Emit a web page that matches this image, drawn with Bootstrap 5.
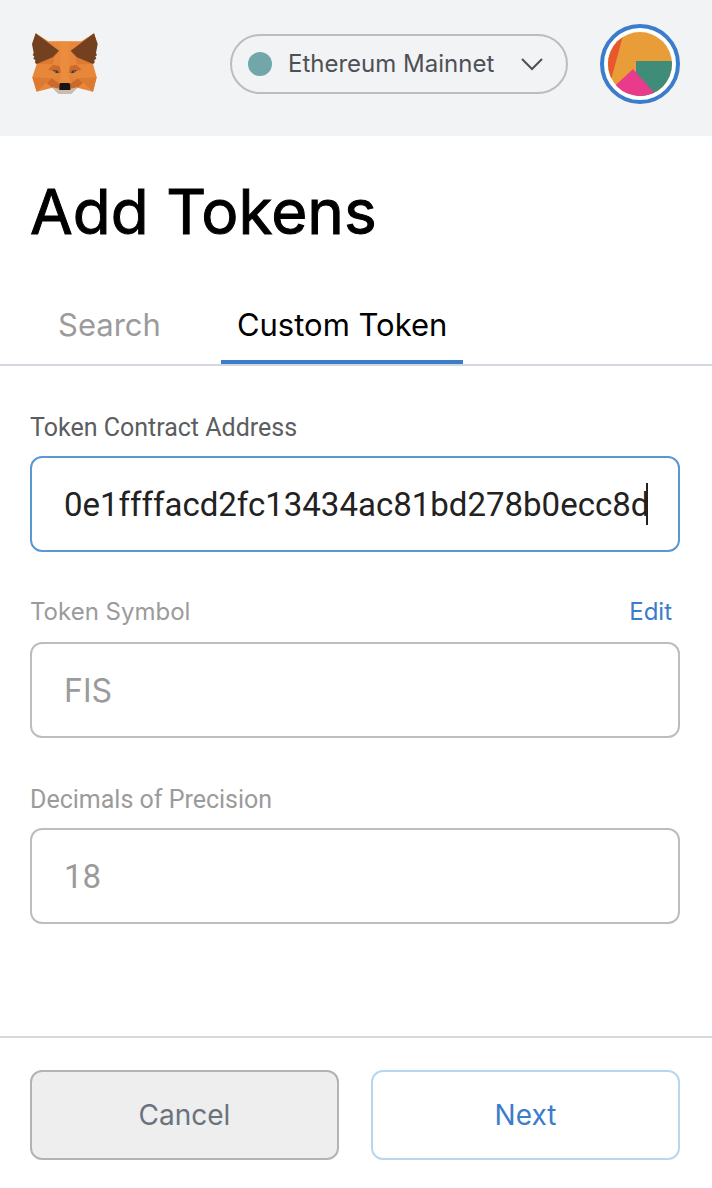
<!DOCTYPE html>
<html lang="en">
<head>
<meta charset="utf-8">
<meta name="viewport" content="width=device-width, initial-scale=1">
<title>Add Tokens</title>
<link href="https://cdn.jsdelivr.net/npm/bootstrap@5.3.0/dist/css/bootstrap.min.css" rel="stylesheet">
<style>
  body { font-family: Inter, "Liberation Sans", sans-serif; color: #000; background: #fff; }
  .app-header { background: #f2f3f4; height: 136px; padding: 0 32px 8px 30px; gap: 32px; }
  .network-btn { height: 60px; width: 338px; border: 2px solid #bbbdc0; border-radius: 30px; padding: 0 22px 0 16px; gap: 16px; font-size: 24px; color: #4d5156; background: transparent; }
  .network-dot { width: 24px; height: 24px; background: #72a7aa; }
  .account-btn { width: 80px; height: 80px; border: 4px solid #3b7dcb; background: #fff; padding: 4px; }
  .page-title { font-size: 62px; line-height: 76px; font-weight: 400; padding: 0 30px; margin: 38px 0 40px; -webkit-text-stroke: 1px #000; }
  .token-tabs { border-bottom: 2px solid #d2d8dd; padding-left: 42px; gap: 44px; }
  .token-tabs .nav-link { height: 74px; padding: 0 16px; font-size: 31px; line-height: 48px; color: #9b9b9b; background: none; border: 0; border-bottom: 4px solid transparent; border-radius: 0; }
  .token-tabs .nav-link.active { color: #000; border-bottom-color: #3b7dcb; }
  .token-form { padding: 42px 32px 112px 30px; gap: 42px; }
  .field-label { font-size: 24px; line-height: 36px; color: #9b9b9b; }
  .field-head { margin-bottom: 12px; }
  .roboto { font-family: Roboto, "Liberation Sans", sans-serif; }
  .field-label.roboto { font-size: 25px; line-height: 32px; padding-top: 4px; }
  .field-label.current { color: #5b5d60; }
  .token-input { height: 96px; border: 2px solid #bbbdc0; border-radius: 12px; padding: 0 30px 0 32px; font-size: 32px; color: #9b9b9b; }
  .token-input:disabled { background: #fff; opacity: 1; color: #9b9b9b; }
  .token-input.roboto { font-size: 33px; }
  .token-input.current, .token-input.current:focus { border-color: #5a98d5; color: #222; box-shadow: none; }
  .edit-link { font-size: 24px; line-height: 36px; color: #3b7dcb; padding-right: 8px; }
  .caret-bar { width: 2px; height: 42px; background: #222; right: 32px; }
  .app-footer { border-top: 2px solid #d6d9dc; padding: 32px 32px 28px 30px; gap: 32px; }
  .action-btn { flex: 1; height: 90px; border-width: 2px; border-radius: 12px; font-size: 28px; }
  .action-cancel, .action-cancel:hover { background: #eee; color: #6a737d; border-color: #b3b3b3; }
  .action-next, .action-next:hover { background: #fff; color: #3b7dcb; border-color: #b9d6ef; }
</style>
</head>
<body>
<header class="app-header d-flex align-items-center">
  <a href="#" aria-label="Home" class="d-block lh-1 me-auto">
    <svg width="70" height="64" viewBox="30 36 210 192" aria-hidden="true">
      <path fill="#e8873a" d="M47 40 85 64H184L222 40 232 72 219 132 230 172 219 215 172 203 154 220H115L97 203 50 215 37 172 50 132 38 72Z"/>
      <path fill="#dd7a32" d="M50 132 117 94 103 112 98 133ZM219 132 152 94 166 112 171 133ZM37 172 96 175 78 188 50 215ZM230 172 173 175 191 188 219 215Z"/>
      <path fill="#ee9548" d="M119 64H150L146 94 151 190H118L123 94Z" opacity=".4"/>
      <path fill="#ca6a2d" d="M84 149 100 134 119 139 123 160ZM185 149 169 134 150 139 146 160ZM96 175 118 190 116 205 97 203 80 189ZM173 175 151 190 153 205 172 203 189 189Z"/>
      <path fill="#e58438" d="M96 175 123 162 118 190ZM173 175 146 162 151 190Z"/>
      <path fill="#734020" d="M47 40 117 92 98 112 50 132 45 128 46 120 40 116 43 109 38 106 41 99 36 72ZM222 40 152 92 171 112 219 132 224 128 223 120 229 116 226 109 231 106 228 99 233 72Z"/>
      <path fill="#c9bdb0" d="M95 201 117 207H152L174 201 154 222H115Z"/>
      <path fill="#45362e" d="M99 150 113 152 116 160 104 158ZM170 150 156 152 153 160 165 158Z"/>
      <path fill="#a4a9af" d="M100 156 108 154 105 159ZM169 156 161 154 164 159Z"/>
      <path fill="#171615" d="M121 189H148L151 194V210H118V194Z"/>
    </svg>
  </a>
  <button type="button" class="network-btn d-flex align-items-center">
    <span class="network-dot rounded-circle"></span>
    <span>Ethereum Mainnet</span>
    <svg class="ms-auto" width="24" height="16" viewBox="0 0 24 16" fill="none" stroke="#4d5156" stroke-width="2" aria-hidden="true"><path d="M2 3 12 13 22 3"/></svg>
  </button>
  <button type="button" class="account-btn rounded-circle" aria-label="My account">
    <svg class="d-block rounded-circle" width="64" height="64" viewBox="0 0 64 64" aria-hidden="true">
      <path fill="#e99d39" d="M0 0H64V64H0Z"/>
      <path fill="#e7582c" d="M0 0H16L3 48H0Z"/>
      <path fill="#3f8d78" d="M28 29H64V64H28Z"/>
      <path fill="#e93b8b" d="M25 37 50 65H-5Z"/>
    </svg>
  </button>
</header>
<main>
  <h1 class="page-title">Add Tokens</h1>
  <ul class="nav token-tabs">
    <li class="nav-item"><button type="button" class="nav-link">Search</button></li>
    <li class="nav-item"><button type="button" class="nav-link active">Custom Token</button></li>
  </ul>
  <form class="token-form d-flex flex-column">
    <div>
      <div class="field-head d-flex"><label class="field-label roboto current" for="address">Token Contract Address</label></div>
      <div class="position-relative d-flex align-items-center">
        <input class="form-control token-input roboto current" id="address" type="text" value="0e1ffffacd2fc13434ac81bd278b0ecc8d">
        <span class="caret-bar position-absolute"></span>
      </div>
    </div>
    <div>
      <div class="field-head d-flex justify-content-between">
        <label class="field-label" for="symbol">Token Symbol</label>
        <a href="#" class="edit-link text-decoration-none">Edit</a>
      </div>
      <input class="form-control token-input" id="symbol" type="text" value="FIS" disabled>
    </div>
    <div>
      <div class="field-head d-flex"><label class="field-label roboto" for="decimals">Decimals of Precision</label></div>
      <input class="form-control token-input roboto" id="decimals" type="text" value="18" disabled>
    </div>
  </form>
</main>
<footer class="app-footer d-flex">
  <button type="button" class="btn action-btn action-cancel">Cancel</button>
  <button type="button" class="btn action-btn action-next">Next</button>
</footer>
<script src="https://cdn.jsdelivr.net/npm/bootstrap@5.3.0/dist/js/bootstrap.bundle.min.js"></script>
</body>
</html>
